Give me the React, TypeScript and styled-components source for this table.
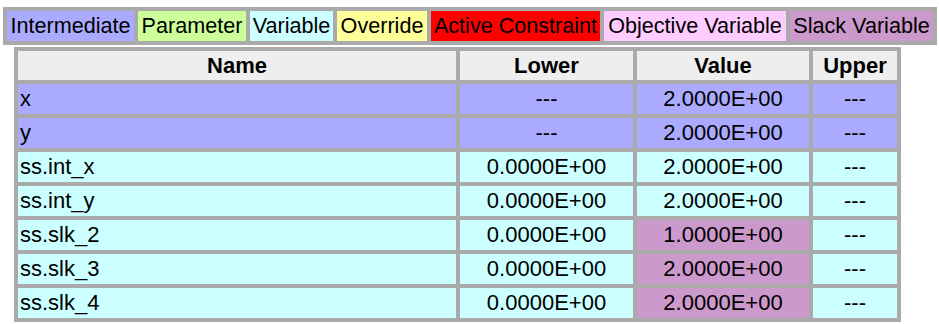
import styled, { createGlobalStyle } from "styled-components";

type Kind = "intermediate" | "parameter" | "variable" | "override" | "active" | "objective" | "slack";

const colors: Record<Kind, string> = {
    intermediate: "#aaaaff",
    parameter: "#ccff99",
    variable: "#ccffff",
    override: "#ffff99",
    active: "#ff0000",
    objective: "#ffccff",
    slack: "#cc99cc",
};

const legend: { kind: Kind; label: string; width: number }[] = [
    { kind: "intermediate", label: "Intermediate", width: 127 },
    { kind: "parameter", label: "Parameter", width: 108 },
    { kind: "variable", label: "Variable", width: 83 },
    { kind: "override", label: "Override", width: 90 },
    { kind: "active", label: "Active Constraint", width: 169 },
    { kind: "objective", label: "Objective Variable", width: 182 },
    { kind: "slack", label: "Slack Variable", width: 143 },
];

interface Row {
    name: string;
    kind: Kind;
    lower: string;
    value: string;
    valueKind?: Kind;
    upper: string;
}

const rows: Row[] = [
    { name: "x", kind: "intermediate", lower: "---", value: "2.0000E+00", upper: "---" },
    { name: "y", kind: "intermediate", lower: "---", value: "2.0000E+00", upper: "---" },
    { name: "ss.int_x", kind: "variable", lower: "0.0000E+00", value: "2.0000E+00", upper: "---" },
    { name: "ss.int_y", kind: "variable", lower: "0.0000E+00", value: "2.0000E+00", upper: "---" },
    { name: "ss.slk_2", kind: "variable", lower: "0.0000E+00", value: "1.0000E+00", valueKind: "slack", upper: "---" },
    { name: "ss.slk_3", kind: "variable", lower: "0.0000E+00", value: "2.0000E+00", valueKind: "slack", upper: "---" },
    { name: "ss.slk_4", kind: "variable", lower: "0.0000E+00", value: "2.0000E+00", valueKind: "slack", upper: "---" },
];

const App = () => {
    return (
        <Page>
            <GlobalStyle />
            <Legend>
                {legend.map((l) => (
                    <Key key={l.kind} kind={l.kind} w={l.width}>
                        {l.label}
                    </Key>
                ))}
            </Legend>
            <Table>
                <colgroup>
                    <col style={{ width: 438 }} />
                    <col style={{ width: 173 }} />
                    <col style={{ width: 172 }} />
                    <col style={{ width: 84 }} />
                </colgroup>
                <thead>
                    <tr>
                        <Th>Name</Th>
                        <Th>Lower</Th>
                        <Th>Value</Th>
                        <Th>Upper</Th>
                    </tr>
                </thead>
                <tbody>
                    {rows.map((r) => (
                        <tr key={r.name}>
                            <Td kind={r.kind} left>
                                {r.name}
                            </Td>
                            <Td kind={r.kind}>{r.lower}</Td>
                            <Td kind={r.valueKind ?? r.kind}>{r.value}</Td>
                            <Td kind={r.kind}>{r.upper}</Td>
                        </tr>
                    ))}
                </tbody>
            </Table>
        </Page>
    );
};

const GlobalStyle = createGlobalStyle`
    body {
        margin: 0;
        background: #ffffff;
        font-family: "Liberation Sans", Arial, sans-serif;
        color: #000000;
    }
`;

const Page = styled.div`
    padding: 7px 0 0 3px;
`;

const Legend = styled.div`
    display: inline-flex;
    gap: 4px;
    padding: 4px;
    background: #aaaaaa;
`;

const Key = styled.div<{ kind: Kind; w: number }>`
    width: ${(p) => p.w}px;
    height: 30px;
    line-height: 30px;
    font-size: 21.6px;
    text-align: center;
    white-space: nowrap;
    background: ${(p) => colors[p.kind]};
`;

const Table = styled.table`
    margin: 2px 0 0 11px;
    background: #aaaaaa;
    border-spacing: 4px;
    table-layout: fixed;
    width: 887px;
    font-size: 22px;
`;

const Th = styled.th`
    height: 29px;
    padding: 0;
    background: #eeeeee;
    font-weight: bold;
    text-align: center;
`;

const Td = styled.td<{ kind: Kind; left?: boolean }>`
    height: 30px;
    padding: 0 0 0 ${(p) => (p.left ? "2px" : "0")};
    background: ${(p) => colors[p.kind]};
    text-align: ${(p) => (p.left ? "left" : "center")};
    white-space: nowrap;
`;

export default App;
